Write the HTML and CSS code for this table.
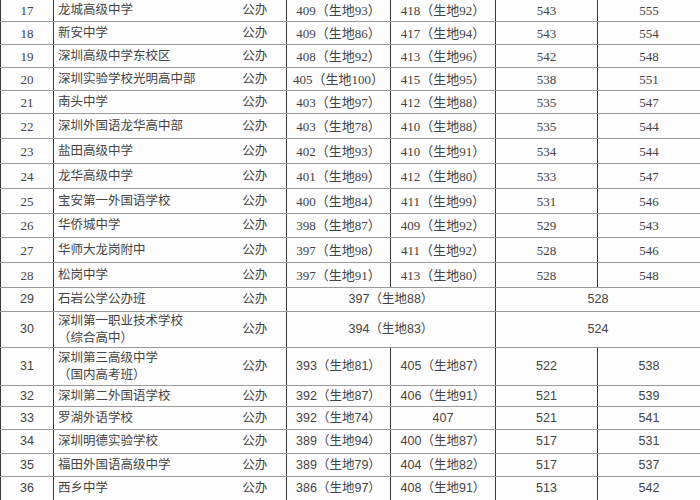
FILE: index.html
```html
<!DOCTYPE html>
<html lang="zh-CN">
<head>
<meta charset="utf-8">
<title>分数线</title>
<link rel="stylesheet" href="styles.css">
</head>
<body>
<table class="scores">
  <colgroup>
    <col class="c-id"><col class="c-name"><col class="c-type"><col class="c-s1"><col class="c-s2"><col class="c-s3"><col class="c-s4">
  </colgroup>
  <tbody>
    <tr class="h23"><td>17</td><td class="name">龙城高级中学</td><td class="type">公办</td><td>409（生地93）</td><td>418（生地92）</td><td>543</td><td>555</td></tr>
    <tr class="h23"><td>18</td><td class="name">新安中学</td><td class="type">公办</td><td>409（生地86）</td><td>417（生地94）</td><td>543</td><td>554</td></tr>
    <tr class="h23"><td>19</td><td class="name">深圳高级中学东校区</td><td class="type">公办</td><td>408（生地92）</td><td>413（生地96）</td><td>542</td><td>548</td></tr>
    <tr class="h23"><td>20</td><td class="name">深圳实验学校光明高中部</td><td class="type">公办</td><td>405（生地100）</td><td>415（生地95）</td><td>538</td><td>551</td></tr>
    <tr class="h23"><td>21</td><td class="name">南头中学</td><td class="type">公办</td><td>403（生地97）</td><td>412（生地88）</td><td>535</td><td>547</td></tr>
    <tr class="h25"><td>22</td><td class="name">深圳外国语龙华高中部</td><td class="type">公办</td><td>403（生地78）</td><td>410（生地88）</td><td>535</td><td>544</td></tr>
    <tr class="h25"><td>23</td><td class="name">盐田高级中学</td><td class="type">公办</td><td>402（生地93）</td><td>410（生地91）</td><td>534</td><td>544</td></tr>
    <tr class="h25"><td>24</td><td class="name">龙华高级中学</td><td class="type">公办</td><td>401（生地89）</td><td>412（生地80）</td><td>533</td><td>547</td></tr>
    <tr class="h25"><td>25</td><td class="name">宝安第一外国语学校</td><td class="type">公办</td><td>400（生地84）</td><td>411（生地99）</td><td>531</td><td>546</td></tr>
    <tr class="h24"><td>26</td><td class="name">华侨城中学</td><td class="type">公办</td><td>398（生地87）</td><td>409（生地92）</td><td>529</td><td>543</td></tr>
    <tr class="h25"><td>27</td><td class="name">华师大龙岗附中</td><td class="type">公办</td><td>397（生地98）</td><td>411（生地92）</td><td>528</td><td>546</td></tr>
    <tr class="h25"><td>28</td><td class="name">松岗中学</td><td class="type">公办</td><td>397（生地91）</td><td>413（生地80）</td><td>528</td><td>548</td></tr>
    <tr class="h24 sans"><td>29</td><td class="name">石岩公学公办班</td><td class="type">公办</td><td colspan="2">397（生地88）</td><td colspan="2">528</td></tr>
    <tr class="h36 sans"><td>30</td><td class="name">深圳第一职业技术学校<br>（综合高中）</td><td class="type">公办</td><td colspan="2">394（生地83）</td><td colspan="2">524</td></tr>
    <tr class="h38 sans"><td>31</td><td class="name">深圳第三高级中学<br>（国内高考班）</td><td class="type">公办</td><td>393（生地81）</td><td>405（生地87）</td><td>522</td><td>538</td></tr>
    <tr class="h21 sans"><td>32</td><td class="name">深圳第二外国语学校</td><td class="type">公办</td><td>392（生地87）</td><td>406（生地91）</td><td>521</td><td>539</td></tr>
    <tr class="h23 sans"><td>33</td><td class="name">罗湖外语学校</td><td class="type">公办</td><td>392（生地74）</td><td>407</td><td>521</td><td>541</td></tr>
    <tr class="h24 sans"><td>34</td><td class="name">深圳明德实验学校</td><td class="type">公办</td><td>389（生地94）</td><td>400（生地87）</td><td>517</td><td>531</td></tr>
    <tr class="h23 sans"><td>35</td><td class="name">福田外国语高级中学</td><td class="type">公办</td><td>389（生地79）</td><td>404（生地82）</td><td>517</td><td>537</td></tr>
    <tr class="h24 sans"><td>36</td><td class="name">西乡中学</td><td class="type">公办</td><td>386（生地97）</td><td>408（生地91）</td><td>513</td><td>542</td></tr>
  </tbody>
</table>
</body>
</html>
```

FILE: styles.css
```css
html, body {
  margin: 0;
  padding: 0;
  background: #fdfdfd;
  overflow: hidden;
}

.scores {
  width: 700px;
  margin-top: -2px;
  border-collapse: collapse;
  table-layout: fixed;
  font-family: "Liberation Serif", "Noto Sans CJK SC", serif;
  font-size: 13px;
  line-height: 17px;
  color: #444;
}

.c-id { width: 53px; }
.c-name { width: 169px; }
.c-type { width: 64px; }
.c-s1 { width: 104px; }
.c-s2 { width: 105px; }
.c-s3 { width: 102px; }
.c-s4 { width: 103px; }

.scores td {
  padding: 0;
  text-align: center;
  vertical-align: middle;
  white-space: nowrap;
  border-top: 1px solid #9a9a9a;
  border-bottom: 1px solid #9a9a9a;
  border-left: 1px solid #3a3a3a;
  border-right: 1px solid #3a3a3a;
}

.scores td.name {
  text-align: left;
  padding-left: 4px;
  font-size: 12.5px;
  border-right: none;
}

.scores td.type {
  border-left: none;
  padding-left: 1px;
  font-size: 12.5px;
}

.sans td {
  font-family: "Liberation Sans", "Noto Sans CJK SC", sans-serif;
  font-size: 12.5px;
}

.sans td.name,
.sans td.type {
  font-family: "Liberation Serif", "Noto Sans CJK SC", serif;
}

.h21 { height: 21px; }
.h23 { height: 23px; }
.h24 { height: 24px; }
.h25 { height: 25px; }
.h36 { height: 36px; }
.h38 { height: 38px; }
```
